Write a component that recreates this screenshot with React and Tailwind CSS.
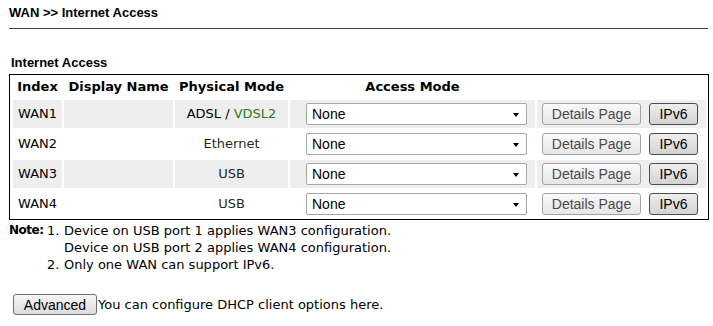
import React from 'react'

const rows = [
  { index: 'WAN1', mode: 'adsl' },
  { index: 'WAN2', mode: 'Ethernet' },
  { index: 'WAN3', mode: 'USB' },
  { index: 'WAN4', mode: 'USB' },
]

const cols = 'grid grid-cols-[49px_109px_113px_245px_169px] gap-x-[2px]'

const Select = () => (
  <div className="relative ml-[16px] h-[22px] w-[221px] border border-[#a7a7a7] bg-white rounded-[2px] flex items-center">
    <span className="pl-[5px] text-[14px] text-black font-['Liberation_Sans',Arial,sans-serif]">None</span>
    <span className="absolute right-[7px] top-[9px] w-0 h-0 border-l-[3.5px] border-r-[3.5px] border-t-[4px] border-l-transparent border-r-transparent border-t-black" />
  </div>
)

const InternetAccess = () => {
  return (
    <div className="w-[713px] h-[326px] bg-white pl-[9px] pr-[5px] overflow-hidden font-['DejaVu_Sans',Verdana,sans-serif] text-[13px] text-black">
      <div className="h-[29px] border-b border-[#444] pt-[5px]">
        <div className="text-[13px] leading-[16px] font-bold font-['Liberation_Sans',Arial,sans-serif]">
          WAN &gt;&gt; Internet Access
        </div>
      </div>

      <div className="mt-[26px] mb-[3px] text-[13px] leading-[16px] font-bold pl-[2px] font-['Liberation_Sans',Arial,sans-serif]">
        Internet Access
      </div>

      <div className="w-[700px] border border-black pl-[3px] pr-[2px] pt-[1px] pb-[1px]">
        <div className={`${cols} h-[22px] font-bold items-center text-center`}>
          <div>Index</div>
          <div>Display Name</div>
          <div>Physical Mode</div>
          <div>Access Mode</div>
          <div></div>
        </div>

        <div className="flex flex-col gap-y-[2px] mt-[2px]">
          {rows.map((r, i) => {
            const bg = i % 2 === 0 ? 'bg-[#eeeeee]' : 'bg-white'
            return (
              <div key={r.index} className={`${cols} h-[28px]`}>
                <div className={`${bg} flex items-center pl-[5px]`}>{r.index}</div>
                <div className={bg}></div>
                <div className={`${bg} flex items-center justify-center`}>
                  {r.mode === 'adsl' ? (
                    <span>
                      ADSL / <span className="text-[#2f7a1f]">VDSL2</span>
                    </span>
                  ) : (
                    <span className="text-[#1f2a1f]">{r.mode}</span>
                  )}
                </div>
                <div className={`${bg} flex items-center`}>
                  <Select />
                </div>
                <div className={`${bg} flex items-center pl-[5px] gap-x-[8px] font-['Liberation_Sans',Arial,sans-serif] text-[14px]`}>
                  <button className="h-[22px] w-[99px] border border-[#a3a3a3] rounded-[3px] bg-gradient-to-b from-[#fafafa] to-[#e6e6e6] text-[#4a4a4a] leading-none">
                    Details Page
                  </button>
                  <button className="h-[22px] w-[49px] border border-[#4d4d4d] rounded-[3px] bg-gradient-to-b from-[#eeeeee] to-[#d3d3d3] text-black leading-none">
                    IPv6
                  </button>
                </div>
              </div>
            )
          })}
        </div>
      </div>

      <div className="mt-[2px] flex leading-[17px]">
        <div className="w-[38px] shrink-0 font-bold text-[12px] tracking-[-0.5px]">Note:</div>
        <div>
          <div className="flex">
            <span className="w-[17px]">1.</span>
            <span>
              Device on USB port 1 applies WAN3 configuration.
              <br />
              Device on USB port 2 applies WAN4 configuration.
            </span>
          </div>
          <div className="flex">
            <span className="w-[17px]">2.</span>
            <span>Only one WAN can support IPv6.</span>
          </div>
        </div>
      </div>

      <div className="mt-[21px] ml-[4px] flex items-center">
        <button className="h-[21px] w-[84px] border border-[#707070] rounded-[3px] bg-gradient-to-b from-[#f6f6f6] to-[#dcdcdc] text-[14px] leading-none font-['Liberation_Sans',Arial,sans-serif]">
          Advanced
        </button>
        <span className="ml-[1px]">You can configure DHCP client options here.</span>
      </div>
    </div>
  )
}

export default function App() {
  return <InternetAccess />
}
